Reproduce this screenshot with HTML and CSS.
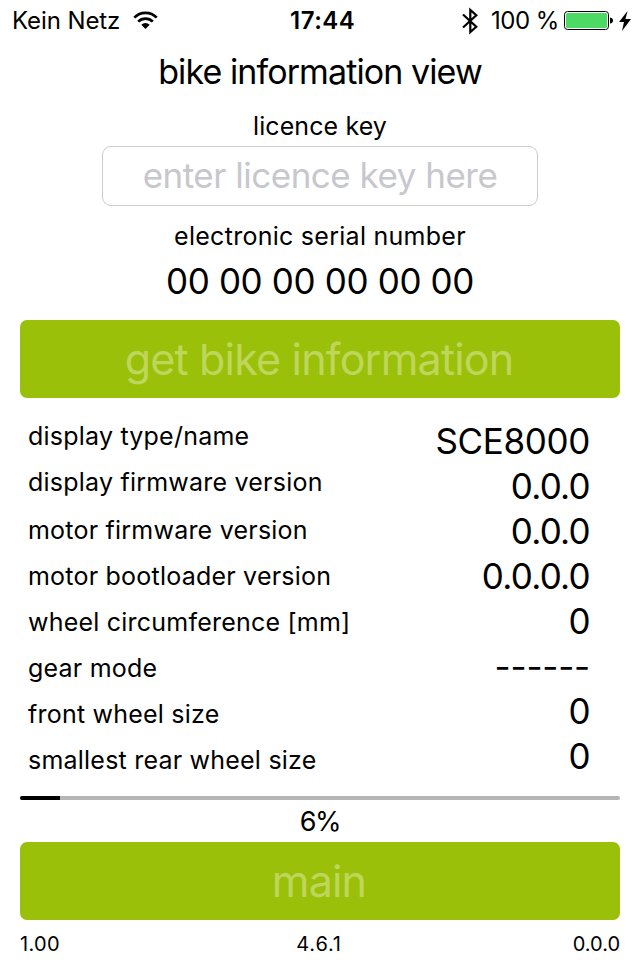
FILE: index.html
```html
<!DOCTYPE html>
<html lang="en"><head><meta charset="utf-8"><title>bike information view</title><link rel="stylesheet" href="styles.css"></head>
<body>
<header class="status">
<span class="carrier">Kein Netz</span>
<svg class="wifi" width="25" height="19" viewBox="0 0 25 19"><path d="M1.300 6.600a15.500 15.500 0 0 1 22.400 0M5.200 10.600a10.300 10.300 0 0 1 14.600 0" fill="none" stroke="#000" stroke-width="2.700"/><path d="M8.300 13.800a6 6 0 0 1 8.400 0L12.500 18z"/></svg>
<span class="clock">17:44</span>
<svg class="bt" width="16" height="28" viewBox="0 0 16 28"><path d="M1 7.500 14.300 19.800 8.300 25V3l6 5.200L1 20.500" fill="none" stroke="#000" stroke-width="2.200"/></svg>
<span class="percent">100 %</span>
<svg class="battery" width="49" height="20" viewBox="0 0 49 20"><rect x=".5" y=".5" width="44" height="18" rx="3" fill="none" stroke="#000"/><rect x="2" y="2" width="41" height="15" rx="1.500" fill="#4cd964"/><path d="M46 6.500q3 .5 3 3t-3 3z"/></svg>
<svg class="bolt" width="12" height="20" viewBox="0 0 12 20"><path d="M8.500 0 0 11h5L3 20l9-12H6.500z"/></svg>
</header>
<main>
<h1>bike information view</h1>
<label class="licence" for="key">licence key</label>
<div class="field" id="key">enter licence key here</div>
<div class="serial-label">electronic serial number</div>
<div class="serial">00 00 00 00 00 00</div>
<button class="get">get bike information</button>
<section class="info">
<div class="labels"><span>display type/name</span><span>display firmware version</span><span>motor firmware version</span><span>motor bootloader version</span><span>wheel circumference [mm]</span><span>gear mode</span><span>front wheel size</span><span>smallest rear wheel size</span></div>
<div class="values"><span class="name">SCE8000</span><span>0.0.0</span><span>0.0.0</span><span>0.0.0.0</span><span>0</span><span class="dashes">------</span><span>0</span><span>0</span></div>
</section>
<div class="track"><div class="fill"></div></div>
<div class="progress">6%</div>
<button class="main">main</button>
</main>
<footer><span>1.00</span><span>4.6.1</span><span>0.0.0</span></footer>
</body></html>
```
FILE: styles.css
```css
*{box-sizing:border-box}
body{margin:0;width:640px;height:960px;background:#fff;color:#000;font-family:Inter,"Liberation Sans",sans-serif;font-size:25px;white-space:nowrap;overflow:hidden}
.status{height:41px;display:flex;align-items:center;padding-left:12px;font-size:24px}
.carrier{width:108px;letter-spacing:-.1px}
.wifi{margin-left:13px}
.clock{margin-left:132px;width:65px;font-weight:600;letter-spacing:.5px}
.bt{margin-left:107px}
.percent{width:68px;margin-left:13px;letter-spacing:-.5px}
.battery{margin-left:5px}
.bolt{margin-left:6px}
main{padding:0 20px;text-align:center}
h1{font-size:34px;font-weight:400;line-height:40px;margin:11px 0 0;letter-spacing:-.9px}
.licence{display:block;line-height:30px;margin-top:19px;letter-spacing:.1px}
.field{width:436px;height:60px;margin:5px auto 0;border:1px solid #ccc;border-radius:9px;font-size:35px;line-height:56px;color:#c7c7cd;letter-spacing:-.5px}
.serial-label{line-height:30px;margin-top:15px;letter-spacing:.27px}
.serial{font-size:35px;line-height:42px;margin-top:9px;letter-spacing:-.36px}
button{display:block;width:600px;height:78px;border:0;border-radius:7px;background:#9bc00a;color:#bed65a;font:400 43px/78px Inter,sans-serif;letter-spacing:-.8px;padding:0 2px 0 0}
.get{margin-top:18px}
.info{display:flex;justify-content:space-between;height:398px;padding:15px 30px 0 8px}
.labels,.values{display:flex;flex-direction:column}
.labels{text-align:left;letter-spacing:.22px}
.labels span{height:46px;line-height:46px}
.labels span:nth-child(2){height:48px}
.values{text-align:right;font-size:35px;padding-top:6px;letter-spacing:-.7px}
.values span{height:45px;line-height:45px}
.values .name{letter-spacing:-.35px}
.values .dashes{letter-spacing:-.2px}
.track{height:4px;background:#b5b5b5;border-radius:2px;overflow:hidden}
.fill{height:4px;width:40px;background:#000}
.progress{font-size:27px;line-height:32px;margin-top:6px;letter-spacing:-1.3px}
.main{margin-top:4px}
footer{display:grid;grid-template-columns:1fr 1fr 1fr;padding:0 20px;margin-top:12px;font-size:20px;line-height:24px}
footer span:first-child{letter-spacing:.3px}
footer span:nth-child(2){text-align:center;letter-spacing:.8px;padding-right:2px}
footer span:nth-child(3){text-align:right}
```
